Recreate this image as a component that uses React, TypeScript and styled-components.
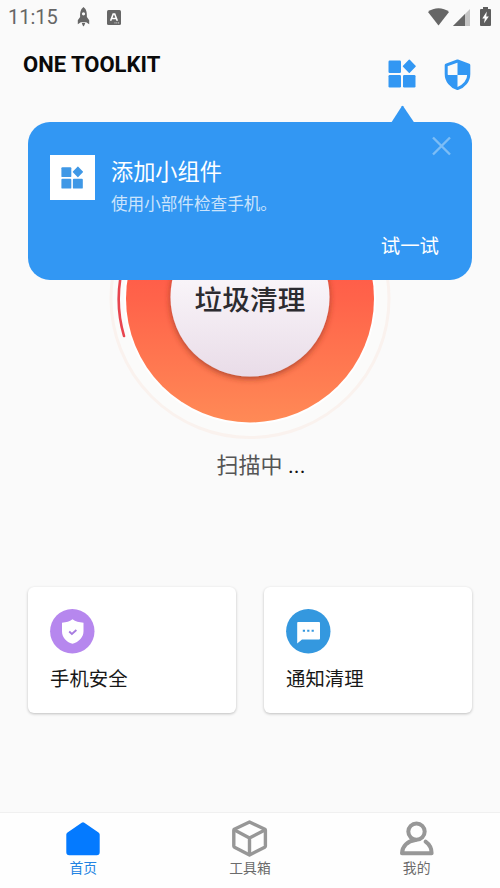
import React from "react";
import styled, { createGlobalStyle } from "styled-components";

const BLUE = "#3297f3";
const cjk = `Roboto, "Noto Sans CJK SC", sans-serif`;

const GlobalStyle = createGlobalStyle`
  * { box-sizing: border-box; }
  body { margin: 0; background: #fafafa; font-family: ${cjk}; }
`;

const Screen = styled.div`
  position: relative;
  display: flex;
  flex-direction: column;
  width: 500px;
  height: 888px;
  overflow: hidden;
  background: #fafafa;
`;

const StatusBar = styled.header`
  display: flex;
  align-items: center;
  height: 34px;
  padding: 0 9px 0 8px;
  color: #666;
`;

const Clock = styled.time`
  width: 52px;
  margin-right: 17px;
  font-size: 20px;
  line-height: 34px;
  white-space: nowrap;
`;

const StatusIcons = styled.div<{ $end?: boolean }>`
  display: flex;
  align-items: center;
  margin-left: ${(p) => (p.$end ? "auto" : "0")};
`;

const Icon = styled.svg<{ $gap?: number }>`
  display: block;
  flex: none;
  margin-left: ${(p) => p.$gap ?? 0}px;
`;

const TitleBar = styled.div`
  display: flex;
  justify-content: space-between;
  height: 88px;
  padding: 19px 29px 0 23px;
`;

const AppTitle = styled.h1`
  margin: 0;
  font-size: 22px;
  font-weight: 700;
  line-height: 24px;
  color: #0a0a0a;
`;

const TitleActions = styled.div`
  display: flex;
  align-items: flex-start;
  padding-top: 6px;
`;

const ScanArea = styled.main`
  display: flex;
  flex-direction: column;
  align-items: center;
  height: 465px;
  padding-top: 36px;
`;

const Dial = styled.div`
  display: grid;
  width: 282px;
  height: 282px;
  place-items: center;

  > * { grid-area: 1 / 1; }
`;

const DialLabel = styled.span`
  z-index: 1;
  padding-top: 3px;
  font-size: 27.7px;
  font-weight: 500;
  line-height: 36px;
  color: #2c2b30;
`;

const ScanStatus = styled.p`
  margin: 9px 0 0 22px;
  font-size: 22px;
  line-height: 34px;
  color: #555;
  white-space: pre;
`;

const Dots = styled.span`
  color: #111;
`;

const CardRow = styled.section`
  display: grid;
  grid-template-columns: 1fr 1fr;
  gap: 28px;
  padding: 0 28px;
`;

const Card = styled.article`
  height: 126px;
  padding: 22px;
  border-radius: 6px;
  background: #fff;
  box-shadow: 0 1px 3px rgba(0, 0, 0, 0.24);
`;

const CardTitle = styled.h2`
  margin: 12px 0 0;
  font-size: 19.4px;
  font-weight: 400;
  line-height: 28px;
  color: #181818;
`;

const NavBar = styled.nav`
  display: grid;
  grid-template-columns: repeat(3, 1fr);
  height: 76px;
  margin-top: auto;
  border-top: 1px solid #f0f0f0;
  background: #fefefe;
`;

const NavItem = styled.div<{ $active?: boolean }>`
  display: flex;
  flex-direction: column;
  align-items: center;
  padding-top: 6px;
  font-size: 13.8px;
  line-height: 20px;
  color: ${(p) => (p.$active ? "#2383e2" : "#6b6b6b")};
`;

const Popover = styled.aside`
  position: absolute;
  top: 122px;
  left: 28px;
  display: flex;
  width: 444px;
  height: 158px;
  padding: 33px 22px 0;
  border-radius: 22px;
  background: ${BLUE};
  color: #fff;
`;

const PopoverArrow = styled.svg`
  position: absolute;
  top: -17px;
  left: 363px;
`;

const CloseMark = styled.svg`
  position: absolute;
  top: 14px;
  right: 21px;
`;

const WidgetTile = styled.div`
  display: grid;
  flex: none;
  width: 45px;
  height: 45px;
  place-items: center;
  background: #fff;
`;

const PopoverBody = styled.div`
  display: flex;
  flex: 1;
  flex-direction: column;
  margin-left: 16px;
`;

const PopoverTitle = styled.h2`
  margin: 1px 0 0;
  font-size: 22.2px;
  font-weight: 400;
  line-height: 32px;
`;

const PopoverText = styled.p`
  margin: 5px 0 0;
  font-size: 16.6px;
  line-height: 24px;
  color: #cbe4fc;
`;

const TryButton = styled.button`
  align-self: flex-end;
  margin: 14px 11px 0 0;
  padding: 0;
  border: 0;
  background: none;
  font-family: ${cjk};
  font-size: 19.4px;
  line-height: 32px;
  color: #fff;
`;

function WidgetsIcon({ size, color }: { size: number; color: string }) {
  return (
    <Icon width={size} height={size} viewBox="0 0 28 29" fill={color}>
      <rect x="0" y="1.5" width="12.5" height="12.5" rx="1.2" />
      <path d="M20.3.8q.5-.5 1 0l5.8 6q.5.5 0 1l-5.8 6q-.5.5-1 0l-5.800-6q-.5-.5 0-1Z" />
      <rect x="0" y="16" width="12.5" height="12.5" rx="1.2" />
      <rect x="14.500" y="16" width="12.5" height="12.5" rx="1.2" />
    </Icon>
  );
}

export default function App() {
  return (
    <>
      <GlobalStyle />
      <Screen>
        <StatusBar>
          <Clock>11:15</Clock>
          <StatusIcons>
            <Icon width="13" height="20" viewBox="0 0 13 20" fill="#666">
              <path
                fillRule="evenodd"
                d="M6.5 0C3.7 2.3 3 5 3.1 10L.8 13.2v4.1l3-2h5.4l3 2v-4.1L9.9 10C10 5 9.3 2.3 6.5 0Zm0 5.2a1.6 1.6 0 1 1 0 3.2 1.6 1.6 0 0 1 0-3.2ZM4.8 16h3.4l-.8 2.2-.9 1.4-.9-1.4Z"
              />
            </Icon>
            <Icon $gap={17} width="14" height="15" viewBox="0 0 14 15">
              <rect width="14" height="15" rx="1.5" fill="#666" />
              <path d="M3.6 10.7 6.2 4h1.5l2.6 6.7M4.7 8.5h4.5" fill="none" stroke="#fff" strokeWidth="1.6" />
              <path d="M7.5 12.9h1m.8 0h1m.8 0h1" stroke="#ddd" strokeWidth="1" />
            </Icon>
          </StatusIcons>
          <StatusIcons $end>
            <Icon width="21" height="18" viewBox="0 0 21 18" fill="#666">
              <path d="M10.5 17.500 0 3.900C5.800-1.100 15.200-1.100 21 3.900Z" />
            </Icon>
            <Icon $gap={4} width="17" height="17" viewBox="0 0 17 17">
              <path d="M0 17 17 0v17Z" fill="#c4c4c4" />
              <path d="M0 17 12 5v12Z" fill="#666" />
            </Icon>
            <Icon $gap={10} width="11" height="21" viewBox="0 0 11 21">
              <path d="M3 0h5v2h2q1 0 1 1v15q0 1-1 1H1q-1 0-1-1V3q0-1 1-1h2Z" fill="#5d5d5d" />
              <path d="m6.8 4.500-4.500 7h2.500L4 16.300l4.800-6.800H6.200Z" fill="#fff" />
            </Icon>
          </StatusIcons>
        </StatusBar>

        <TitleBar>
          <AppTitle>ONE TOOLKIT</AppTitle>
          <TitleActions>
            <WidgetsIcon size={29} color={BLUE} />
            <Icon $gap={27} width="27" height="32" viewBox="0 0 27 32">
              <path
                d="M13.5 2 24.800 6.200v8.700c0 6.900-4.700 12.500-11.300 14.700C6.900 27.400 2.200 21.800 2.200 14.900V6.200Z"
                fill="#fafafa"
              />
              <path d="M13.500 2 25 6.200V16H13.500ZM13.500 16v13.800C7.500 27.700 3 22.800 2.200 16Z" fill={BLUE} />
              <path
                d="M13.500 2 24.800 6.200v8.700c0 6.900-4.700 12.500-11.300 14.700C6.900 27.400 2.200 21.800 2.200 14.900V6.200Z"
                fill="none"
                stroke={BLUE}
                strokeWidth="3"
                strokeLinejoin="round"
              />
            </Icon>
          </TitleActions>
        </TitleBar>

        <ScanArea>
          <Dial>
            <Icon width="282" height="282" viewBox="0 0 282 282">
              <defs>
                <linearGradient id="ring" x1="0" y1="0" x2="0" y2="1">
                  <stop offset="0" stopColor="#ff4545" />
                  <stop offset="0.5" stopColor="#ff634a" />
                  <stop offset="1" stopColor="#ff8a56" />
                </linearGradient>
                <linearGradient id="button" x1="0" y1="0" x2="0" y2="1">
                  <stop offset="0.35" stopColor="#faf6fa" />
                  <stop offset="1" stopColor="#e9dce8" />
                </linearGradient>
                <filter id="shade" x="-20%" y="-20%" width="140%" height="140%">
                  <feDropShadow dx="0" dy="2" stdDeviation="3" floodColor="#8b2e1c" floodOpacity="0.7" />
                </filter>
              </defs>
              <circle cx="141" cy="140.5" r="139" fill="#fbfbfa" stroke="#faf2ee" strokeWidth="3" />
              <circle cx="141" cy="140.5" r="126" fill="#fff" />
              <circle cx="141" cy="140.5" r="124" fill="url(#ring)" />
              <path
                d="M15 178A131 131 0 0 1 32 68"
                fill="none"
                stroke="#e8454f"
                strokeWidth="2.6"
                strokeLinecap="round"
              />
              <circle cx="141" cy="139" r="79.5" fill="url(#button)" filter="url(#shade)" />
            </Icon>
            <DialLabel>垃圾清理</DialLabel>
          </Dial>
          <ScanStatus>
            扫描中<Dots> ...</Dots>
          </ScanStatus>
        </ScanArea>

        <CardRow>
          <Card>
            <Icon width="45" height="45" viewBox="0 0 45 45">
              <circle cx="22.3" cy="22.3" r="22.2" fill="#b687ee" />
              <path
                d="M22.500 10.300c3 2.200 6.500 3.200 11 3.400v8.500c0 6-4.500 10.600-11 12.600-6.500-2-10.500-6.600-10.500-12.600v-8.500c4.500-.2 7.500-1.200 10.500-3.400Z"
                fill="#fff"
              />
              <path d="m19.200 22.500 2.700 2.500 4.500-4" fill="none" stroke="#a77be0" strokeWidth="1.8" />
            </Icon>
            <CardTitle>手机安全</CardTitle>
          </Card>
          <Card>
            <Icon width="45" height="45" viewBox="0 0 45 45">
              <circle cx="22.3" cy="22.3" r="22.2" fill="#3498df" />
              <path d="M12 13h21q1 0 1 1v15.500q0 1-1 1H16l-4.800 4V14q0-1 .8-1Z" fill="#fff" />
              <path d="M16.800 21.700h2.200m2.200 0h2.200m2.200 0h2.200" stroke="#3498df" strokeWidth="2" />
            </Icon>
            <CardTitle>通知清理</CardTitle>
          </Card>
        </CardRow>

        <NavBar>
          <NavItem $active>
            <Icon width="40" height="39" viewBox="0 0 40 39">
              <path
                d="M18.700 3.800q1.300-.9 2.600 0l14.200 9.600q1.200.8 1.200 2.100v17.700q0 3-3 3H6.300q-3 0-3-3V15.500q0-1.300 1.200-2.100Z"
                fill="#047aff"
              />
            </Icon>
            <span>首页</span>
          </NavItem>
          <NavItem>
            <Icon
              width="40"
              height="39"
              viewBox="0 0 40 39"
              fill="none"
              stroke="#979797"
              strokeWidth="3.4"
              strokeLinejoin="round"
            >
              <path d="M19.500 3 34.900 10.300q.5.300.5 1V27q0 .8-.7 1.200L19.500 36 4.500 28.200q-.7-.4-.7-1.200V11.300q0-.7.5-1Z" />
              <path d="m4.500 11 15 8 15.400-8M19.500 19v17" />
            </Icon>
            <span>工具箱</span>
          </NavItem>
          <NavItem>
            <Icon
              width="40"
              height="39"
              viewBox="0 0 40 39"
              fill="none"
              stroke="#979797"
              strokeWidth="4"
              strokeLinecap="round"
              strokeLinejoin="round"
            >
              <circle cx="19.500" cy="12.600" r="8.200" />
              <path d="M18.500 21C10.500 21.800 5.200 27.500 5 34.200h29.600c0-4.700-2.200-8.800-6-11.500" />
            </Icon>
            <span>我的</span>
          </NavItem>
        </NavBar>

        <Popover>
          <PopoverArrow width="24" height="18" viewBox="0 0 24 18">
            <path d="M10.800 1.200q.7-1 1.400 0L23.500 18H0Z" fill={BLUE} />
          </PopoverArrow>
          <CloseMark width="19" height="20" viewBox="0 0 19 20">
            <path d="m1 1.500 17 17M18 1.500l-17 17" stroke="#7cbdf6" strokeWidth="2.4" />
          </CloseMark>
          <WidgetTile>
            <WidgetsIcon size={23} color="#3f98e6" />
          </WidgetTile>
          <PopoverBody>
            <PopoverTitle>添加小组件</PopoverTitle>
            <PopoverText>使用小部件检查手机。</PopoverText>
            <TryButton>试一试</TryButton>
          </PopoverBody>
        </Popover>
      </Screen>
    </>
  );
}
